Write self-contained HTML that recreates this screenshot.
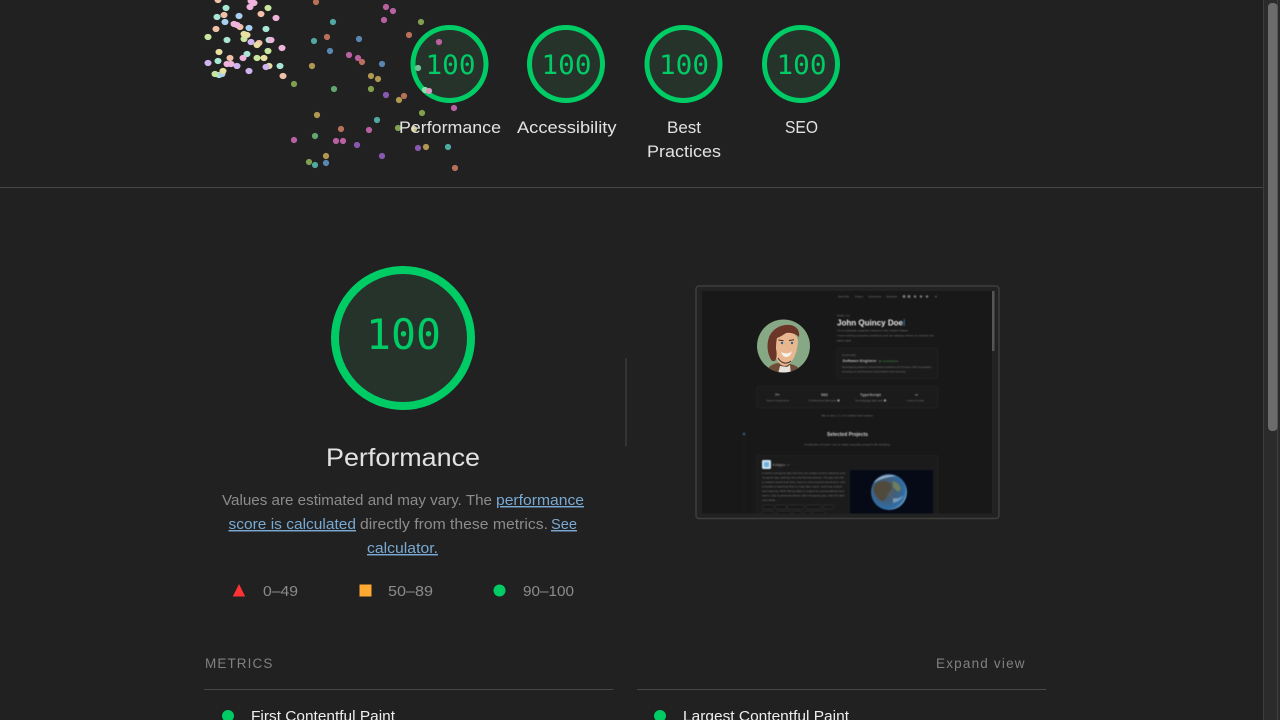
<!DOCTYPE html>
<html lang="en"><head><meta charset="utf-8"><title>Lighthouse report</title>
<style>
html,body{margin:0;padding:0;background:#212121;width:1280px;height:720px;overflow:hidden}
svg{display:block;position:absolute;left:0;top:0}
text{font-family:"Liberation Sans",sans-serif}
.m{font-family:"DejaVu Sans Mono",monospace;fill:#00cc66}
.l{font-size:16.5px;fill:#e2e2e2}
.d{font-size:14.5px;fill:#8c8c8c}
.a{font-size:14.5px;fill:#79a9d2;text-decoration:underline}
.s{font-size:13.5px;fill:#808080}
.n{font-size:14.5px;fill:#eeeeee}
.t{fill:#727272;font-size:3px}
</style></head><body>
<svg width="1280" height="720" viewBox="0 0 1280 720" xmlns="http://www.w3.org/2000/svg">
<defs>
<clipPath id="ci"><rect x="702" y="291" width="292.500" height="222.500"/></clipPath>
<clipPath id="av"><circle cx="783.500" cy="346" r="26.500"/></clipPath>
<clipPath id="pl"><circle cx="889" cy="492" r="18"/></clipPath>
<radialGradient id="earth" cx="42%" cy="45%" r="62%"><stop offset="0" stop-color="#5d5a4c"/><stop offset=".5" stop-color="#3f5f7f"/><stop offset=".85" stop-color="#2f6fa8"/><stop offset="1" stop-color="#a0c4e0"/></radialGradient>
</defs>
<rect width="1280" height="720" fill="#212121"/>

<!-- top gauges -->
<g fill="#26332b" stroke="#00cc66" stroke-width="5">
<circle cx="449.500" cy="64" r="36.500"/><circle cx="566" cy="64" r="36.500"/><circle cx="683.500" cy="64" r="36.500"/><circle cx="801" cy="64" r="36.500"/>
</g>
<text class="m" x="425.500" y="74" textLength="50" lengthAdjust="spacingAndGlyphs" font-size="27">100</text>
<text class="m" x="541.500" y="74" textLength="50" lengthAdjust="spacingAndGlyphs" font-size="27">100</text>
<text class="m" x="659" y="74" textLength="50" lengthAdjust="spacingAndGlyphs" font-size="27">100</text>
<text class="m" x="776.500" y="74" textLength="50" lengthAdjust="spacingAndGlyphs" font-size="27">100</text>

<!-- confetti -->
<g style="filter:blur(.3px)">
<g fill="#a8e6d5"><ellipse cx="226" cy="8" rx="3.500" ry="3.100"/><ellipse cx="217" cy="17" rx="3.500" ry="3.100"/><ellipse cx="266" cy="29" rx="3.500" ry="3.100"/><ellipse cx="227" cy="40" rx="3.500" ry="3.100"/><ellipse cx="269" cy="40" rx="3.500" ry="3.100"/><ellipse cx="247" cy="54" rx="3.500" ry="3.100"/><ellipse cx="218" cy="61" rx="3.500" ry="3.100"/><ellipse cx="280" cy="66" rx="3.500" ry="3.100"/><ellipse cx="219" cy="75" rx="3.500" ry="3.100"/></g>
<g fill="#f0c0a8"><ellipse cx="218" cy="0" rx="3.500" ry="3.100"/><ellipse cx="224" cy="15" rx="3.500" ry="3.100"/><ellipse cx="261" cy="14" rx="3.500" ry="3.100"/><ellipse cx="240" cy="27" rx="3.500" ry="3.100"/><ellipse cx="216" cy="29" rx="3.500" ry="3.100"/><ellipse cx="259" cy="43" rx="3.500" ry="3.100"/><ellipse cx="230" cy="58" rx="3.500" ry="3.100"/><ellipse cx="283" cy="76" rx="3.500" ry="3.100"/></g>
<g fill="#f0b4dc"><ellipse cx="251" cy="1" rx="3.500" ry="3.100"/><ellipse cx="254" cy="3" rx="3.500" ry="3.100"/><ellipse cx="250" cy="7" rx="3.500" ry="3.100"/><ellipse cx="276" cy="18" rx="3.500" ry="3.100"/><ellipse cx="234" cy="24" rx="3.500" ry="3.100"/><ellipse cx="237" cy="25" rx="3.500" ry="3.100"/><ellipse cx="271" cy="40" rx="3.500" ry="3.100"/><ellipse cx="282" cy="48" rx="3.500" ry="3.100"/><ellipse cx="243" cy="58" rx="3.500" ry="3.100"/><ellipse cx="227" cy="64" rx="3.500" ry="3.100"/><ellipse cx="231" cy="64" rx="3.500" ry="3.100"/></g>
<g fill="#c8e6a0"><ellipse cx="268" cy="8" rx="3.500" ry="3.100"/><ellipse cx="208" cy="37" rx="3.500" ry="3.100"/><ellipse cx="244" cy="39" rx="3.500" ry="3.100"/><ellipse cx="268" cy="51" rx="3.500" ry="3.100"/><ellipse cx="257" cy="58" rx="3.500" ry="3.100"/><ellipse cx="215" cy="74" rx="3.500" ry="3.100"/></g>
<g fill="#a8d0f0"><ellipse cx="239" cy="16" rx="3.500" ry="3.100"/><ellipse cx="225" cy="22" rx="3.500" ry="3.100"/><ellipse cx="249" cy="28" rx="3.500" ry="3.100"/><ellipse cx="222" cy="74" rx="3.500" ry="3.100"/></g>
<g fill="#e8e0a0"><ellipse cx="244" cy="34" rx="3.500" ry="3.100"/><ellipse cx="247" cy="35" rx="3.500" ry="3.100"/><ellipse cx="257" cy="45" rx="3.500" ry="3.100"/><ellipse cx="219" cy="52" rx="3.500" ry="3.100"/><ellipse cx="264" cy="58" rx="3.500" ry="3.100"/><ellipse cx="269" cy="66" rx="3.500" ry="3.100"/><ellipse cx="223" cy="71" rx="3.500" ry="3.100"/></g>
<g fill="#d0b4f0"><ellipse cx="251" cy="42" rx="3.500" ry="3.100"/><ellipse cx="208" cy="63" rx="3.500" ry="3.100"/><ellipse cx="237" cy="66" rx="3.500" ry="3.100"/><ellipse cx="266" cy="67" rx="3.500" ry="3.100"/><ellipse cx="249" cy="71" rx="3.500" ry="3.100"/></g>

<g fill="#b87058"><circle cx="316" cy="2" r="3.100"/><circle cx="409" cy="35" r="3.100"/><circle cx="327" cy="37" r="3.100"/><circle cx="362" cy="62" r="3.100"/><circle cx="404" cy="96" r="3.100"/><circle cx="341" cy="129" r="3.100"/><circle cx="455" cy="168" r="3.100"/></g>
<g fill="#b860a0"><circle cx="386" cy="7" r="3.100"/><circle cx="393" cy="11" r="3.100"/><circle cx="384" cy="20" r="3.100"/><circle cx="439" cy="42" r="3.100"/><circle cx="349" cy="55" r="3.100"/><circle cx="358" cy="58" r="3.100"/><circle cx="454" cy="108" r="3.100"/><circle cx="369" cy="130" r="3.100"/><circle cx="294" cy="140" r="3.100"/><circle cx="336" cy="141" r="3.100"/><circle cx="343" cy="141" r="3.100"/></g>
<g fill="#50a8a0"><circle cx="333" cy="22" r="3.100"/><circle cx="314" cy="41" r="3.100"/><circle cx="377" cy="120" r="3.100"/><circle cx="448" cy="147" r="3.100"/><circle cx="315" cy="165" r="3.100"/></g>
<g fill="#80a050"><circle cx="421" cy="22" r="3.100"/><circle cx="294" cy="84" r="3.100"/><circle cx="371" cy="89" r="3.100"/><circle cx="422" cy="113" r="3.100"/><circle cx="398" cy="128" r="3.100"/><circle cx="309" cy="162" r="3.100"/></g>
<g fill="#5888b0"><circle cx="359" cy="39" r="3.100"/><circle cx="330" cy="51" r="3.100"/><circle cx="382" cy="64" r="3.100"/><circle cx="326" cy="163" r="3.100"/></g>
<g fill="#b09850"><circle cx="312" cy="66" r="3.100"/><circle cx="371" cy="76" r="3.100"/><circle cx="378" cy="79" r="3.100"/><circle cx="399" cy="100" r="3.100"/><circle cx="317" cy="115" r="3.100"/><circle cx="426" cy="147" r="3.100"/><circle cx="326" cy="156" r="3.100"/></g>
<g fill="#60a870"><circle cx="334" cy="89" r="3.100"/><circle cx="315" cy="136" r="3.100"/></g>
<g fill="#8858b0"><circle cx="386" cy="95" r="3.100"/><circle cx="357" cy="145" r="3.100"/><circle cx="418" cy="148" r="3.100"/><circle cx="382" cy="156" r="3.100"/></g>
<circle cx="418" cy="68" r="3.100" fill="#70c098"/><circle cx="425" cy="90" r="3.100" fill="#8fe0a8"/><circle cx="429" cy="91" r="3.100" fill="#d898c0"/><circle cx="414" cy="129" r="3.100" fill="#c8c070"/>
</g>

<text class="l" x="399" y="133" textLength="102" lengthAdjust="spacingAndGlyphs">Performance</text>
<text class="l" x="517" y="133" textLength="99.500" lengthAdjust="spacingAndGlyphs">Accessibility</text>
<text class="l" x="667" y="133" textLength="34" lengthAdjust="spacingAndGlyphs">Best</text>
<text class="l" x="647" y="157" textLength="74" lengthAdjust="spacingAndGlyphs">Practices</text>
<text class="l" x="785" y="133" textLength="33" lengthAdjust="spacingAndGlyphs" style="font-size:17.500px">SEO</text>

<rect x="0" y="187" width="1264" height="1" fill="#464646"/>

<!-- main gauge -->
<circle cx="403" cy="338" r="68" fill="#26332b" stroke="#00cc66" stroke-width="8"/>
<text class="m" x="366" y="349" textLength="75" lengthAdjust="spacingAndGlyphs" font-size="42">100</text>
<text x="326" y="466" textLength="154" lengthAdjust="spacingAndGlyphs" font-size="25" fill="#e2e2e2">Performance</text>

<text class="d" x="222" y="505" textLength="270" lengthAdjust="spacingAndGlyphs">Values are estimated and may vary. The</text>
<text class="a" x="496" y="505" textLength="88" lengthAdjust="spacingAndGlyphs">performance</text>
<text class="a" x="228.500" y="529" textLength="127.500" lengthAdjust="spacingAndGlyphs">score is calculated</text>
<text class="d" x="360" y="529" textLength="188" lengthAdjust="spacingAndGlyphs">directly from these metrics.</text>
<text class="a" x="551" y="529" textLength="26" lengthAdjust="spacingAndGlyphs">See</text>
<text class="a" x="367" y="553" textLength="71" lengthAdjust="spacingAndGlyphs">calculator.</text>

<polygon points="239,584 245.200,596.500 232.800,596.500" fill="#ff3333"/>
<text class="d" x="263" y="596" textLength="35" lengthAdjust="spacingAndGlyphs">0–49</text>
<rect x="359.500" y="584.500" width="12" height="12" fill="#ffa933"/>
<text class="d" x="388" y="596" textLength="45" lengthAdjust="spacingAndGlyphs">50–89</text>
<circle cx="499.500" cy="590.500" r="6" fill="#00cc66"/>
<text class="d" x="523" y="596" textLength="51" lengthAdjust="spacingAndGlyphs">90–100</text>

<text class="s" x="205" y="668" style="letter-spacing:1.100px">METRICS</text>
<text class="s" x="936" y="668" style="letter-spacing:1.200px">Expand view</text>
<rect x="204" y="689" width="409.500" height="1" fill="#474747"/>
<rect x="637" y="689" width="409" height="1" fill="#474747"/>
<circle cx="228" cy="716" r="6" fill="#00cc66"/>
<text class="n" x="251" y="721" textLength="144" lengthAdjust="spacingAndGlyphs">First Contentful Paint</text>
<circle cx="660" cy="716" r="6" fill="#00cc66"/>
<text class="n" x="683" y="721" textLength="166" lengthAdjust="spacingAndGlyphs">Largest Contentful Paint</text>

<!-- divider -->
<rect x="625.500" y="358" width="1" height="88" fill="#484848"/>

<!-- thumbnail -->
<rect x="696" y="286" width="303" height="232.500" rx="3" fill="#222" stroke="#3e3e3e" stroke-width="1.500"/>
<g clip-path="url(#ci)">
<rect x="702" y="291" width="290" height="223" fill="#181818"/>
<rect x="992" y="291" width="2.500" height="223" fill="#232323"/>
<rect x="992" y="291" width="2.500" height="60" fill="#555"/>
<g style="filter:blur(.45px)">
<text class="t" x="838" y="297.500" textLength="11" lengthAdjust="spacingAndGlyphs">About Me</text>
<text class="t" x="855" y="297.500" textLength="8" lengthAdjust="spacingAndGlyphs">Projects</text>
<text class="t" x="868.500" y="297.500" textLength="13" lengthAdjust="spacingAndGlyphs">Experience</text>
<text class="t" x="886.500" y="297.500" textLength="11" lengthAdjust="spacingAndGlyphs">Education</text>
<g fill="#777"><circle cx="904" cy="296.500" r="1.500"/><circle cx="909" cy="296.500" r="1.500"/><circle cx="915" cy="296.500" r="1.300"/><circle cx="921" cy="296.500" r="1.300"/><circle cx="927" cy="296.500" r="1.300"/><circle cx="936" cy="296.500" r=".8"/></g>

<text class="t" x="837" y="316.500" textLength="13" lengthAdjust="spacingAndGlyphs" font-size="2.500">Hello, I'm</text>
<text x="837" y="325.500" textLength="66" lengthAdjust="spacingAndGlyphs" font-size="8" font-weight="700" fill="#e8e8e8">John Quincy Doe</text>
<rect x="903.800" y="319" width=".8" height="7" fill="#3b7dd8"/>
<text class="t" x="837" y="331.500" textLength="72" lengthAdjust="spacingAndGlyphs">I'm a software engineer based in the United States.</text>
<text class="t" x="837" y="336.500" textLength="97" lengthAdjust="spacingAndGlyphs">I love solving complex problems and am always driven to explore the</text>
<text class="t" x="837" y="341.500" textLength="15" lengthAdjust="spacingAndGlyphs">latest apps.</text>

<rect x="836.500" y="348.500" width="101.500" height="30" rx="2" fill="#1b1b1b" stroke="#262626" stroke-width=".7"/>
<text class="t" x="842" y="356" textLength="14" lengthAdjust="spacingAndGlyphs" font-size="2.500">Currently</text>
<text x="842.500" y="362" textLength="34" lengthAdjust="spacingAndGlyphs" font-size="4" font-weight="700" fill="#bcbcbc">Software Engineer</text>
<text x="878.500" y="362" textLength="20" lengthAdjust="spacingAndGlyphs" font-size="3" fill="#3f8a4a">@ workplace</text>
<text class="t" x="842" y="368" textLength="90" lengthAdjust="spacingAndGlyphs">Developing platform cloud-based solutions for Fortune 100 companies,</text>
<text class="t" x="842" y="372.500" textLength="64" lengthAdjust="spacingAndGlyphs">focusing on performance optimization and security.</text>

<rect x="756.500" y="386.500" width="181.500" height="21.500" rx="2" fill="#1b1b1b" stroke="#262626" stroke-width=".7"/>
<text x="775" y="396" font-size="4" font-weight="700" fill="#aaa">7+</text>
<text x="821" y="396" font-size="4" font-weight="700" fill="#aaa">983</text>
<text x="860" y="396" textLength="21" lengthAdjust="spacingAndGlyphs" font-size="4" font-weight="700" fill="#aaa">TypeScript</text>
<text x="915" y="396" font-size="4" font-weight="700" fill="#aaa">∞</text>
<text class="t" x="766" y="401.500" textLength="23" lengthAdjust="spacingAndGlyphs" font-size="2.500">Years of experience</text>
<text class="t" x="808.500" y="401.500" textLength="28" lengthAdjust="spacingAndGlyphs" font-size="2.500">Contributions (last year)</text>
<text class="t" x="855" y="401.500" textLength="28" lengthAdjust="spacingAndGlyphs" font-size="2.500">Top language (last year)</text>
<text class="t" x="907" y="401.500" textLength="17" lengthAdjust="spacingAndGlyphs" font-size="2.500">Lines of code</text>
<circle cx="838.500" cy="400.500" r="1.200" fill="#999"/><circle cx="885" cy="400.500" r="1.200" fill="#999"/>

<text class="t" x="821" y="416.500" textLength="52" lengthAdjust="spacingAndGlyphs" font-size="2.800">Tap to see (◦) (◦) for what's been shown</text>
<circle cx="744" cy="434" r="1.300" fill="#3c5a78"/>
<rect x="743.700" y="436" width=".5" height="78" fill="#222"/>
<text x="827" y="436" textLength="41" lengthAdjust="spacingAndGlyphs" font-size="5" font-weight="700" fill="#cfcfcf">Selected Projects</text>
<text class="t" x="804" y="445.500" textLength="86" lengthAdjust="spacingAndGlyphs">A collection of tools I use to make everyday people's life amazing</text>

<rect x="756.500" y="455.500" width="181.500" height="62" rx="2" fill="#1b1b1b" stroke="#262626" stroke-width=".7"/>
<rect x="762" y="460" width="9" height="9" rx="1.500" fill="#cfe4f2"/>
<rect x="764" y="462" width="5" height="5" rx="1" fill="#6fb0dc"/>
<text x="772.500" y="466" textLength="17" lengthAdjust="spacingAndGlyphs" font-size="3.200" fill="#999">Kolapp∞ ↗</text>
<text class="t" x="762" y="474" textLength="83" lengthAdjust="spacingAndGlyphs">A work-in-progress app that lets you create custom solutions and</text>
<text class="t" x="762" y="478.500" textLength="82" lengthAdjust="spacingAndGlyphs">recognize app, pitching, from and favorite devices. The app uses ML</text>
<text class="t" x="762" y="483" textLength="83" lengthAdjust="spacingAndGlyphs">to analyze speed and voice, learn to move around real devices, and</text>
<text class="t" x="762" y="487.500" textLength="80" lengthAdjust="spacingAndGlyphs">provides a learning flow to help fast users, and how-to/tips</text>
<text class="t" x="762" y="492" textLength="82" lengthAdjust="spacingAndGlyphs">and step-by. With fitting data to output for personalised and</text>
<text class="t" x="762" y="496.500" textLength="83" lengthAdjust="spacingAndGlyphs">users. Like a personal trainer, their shopping app, with the later</text>
<text class="t" x="762" y="501" textLength="14" lengthAdjust="spacingAndGlyphs">new ideas.</text>
<g fill="#171717" stroke="#3a3a3a" stroke-width=".5">
<rect x="762.500" y="505" width="11" height="4" rx="1"/><rect x="775.500" y="505" width="11" height="4" rx="1"/><rect x="787.500" y="505" width="17" height="4" rx="1"/><rect x="806.500" y="505" width="15" height="4" rx="1"/><rect x="823.500" y="505" width="10" height="4" rx="1"/>
<rect x="762.500" y="511" width="11" height="4" rx="1"/><rect x="777.500" y="511" width="13" height="4" rx="1"/><rect x="793.500" y="511" width="8" height="4" rx="1"/><rect x="804.500" y="511" width="7" height="4" rx="1"/><rect x="813.500" y="511" width="11" height="4" rx="1"/>
</g>
<rect x="850" y="470" width="83" height="48" rx="1.500" fill="#060a16"/>
<circle cx="889" cy="492" r="18" fill="url(#earth)"/>
<g clip-path="url(#pl)">
<path d="M874 486c4-6 12-6 16-3 3 4 1 8-2 10-1 6-5 9-8 7-4-3-8-9-6-14z" fill="#4f4a3c"/>
<path d="M893 481c4 1 7 4 8 8l-3 3-5-5z" fill="#6d7f5c"/>
<path d="M872 484c5-7 14-11 24-8-8 1-17 3-24 8z" fill="#dce8f2" opacity=".55"/>
<path d="M893 498c4 1 8 0 11-3-2 4-6 7-11 8z" fill="#dce8f2" opacity=".4"/>
</g>
</g>

<!-- avatar -->
<g clip-path="url(#av)">
<rect x="755" y="318" width="57" height="57" fill="#87a884"/>
<path d="M766 374c1-7 6-10 12-11l6 2 6-1c6 1 10 4 12 10z" fill="#6e4c38"/>
<path d="M778 374l2-8 7 1 3-2 1 9z" fill="#e6e2dc"/>
<path d="M773 340c0-7 7-10 14-9 7 1 11 5 11 11-1 9-3 17-9 22-3 3-6 2-9 0-5-5-7-15-7-24z" fill="#e8b68f"/>
<path d="M772 361c-5-7-6-18-2-26 4-7 12-11 20-10 7 1 10 6 9 12-3-3-8-5-13-4-3 2-6 4-9 5-1 4-1 8-1 11 1 4 1 9-1 12z" fill="#6b3527"/>
<path d="M778.500 340l5 .8M789 340.500l5-.8" stroke="#4a2a20" stroke-width="1" fill="none"/>
<circle cx="782" cy="343" r="1.200" fill="#34658a"/><circle cx="792" cy="343" r="1.200" fill="#34658a"/>
<path d="M781 352c4 2 8 2 11-1-1 4-3 6-6 6-2 0-4-2-5-5z" fill="#f6f2ec"/>
<path d="M778 358c3 5 8 7 13 3" stroke="#3e2a22" stroke-width="1" fill="none"/>
</g>
</g>
</g>

<!-- outer scrollbar -->
<rect x="1263" y="0" width="17" height="720" fill="#2b2b2b"/>
<rect x="1263" y="0" width="1" height="720" fill="#3c3c3c"/>
<rect x="1277" y="0" width="1" height="720" fill="#3e3e3e"/>
<rect x="1268" y="3" width="9.500" height="428" rx="4" fill="#6c6c6c"/>
</svg>
</body></html>
